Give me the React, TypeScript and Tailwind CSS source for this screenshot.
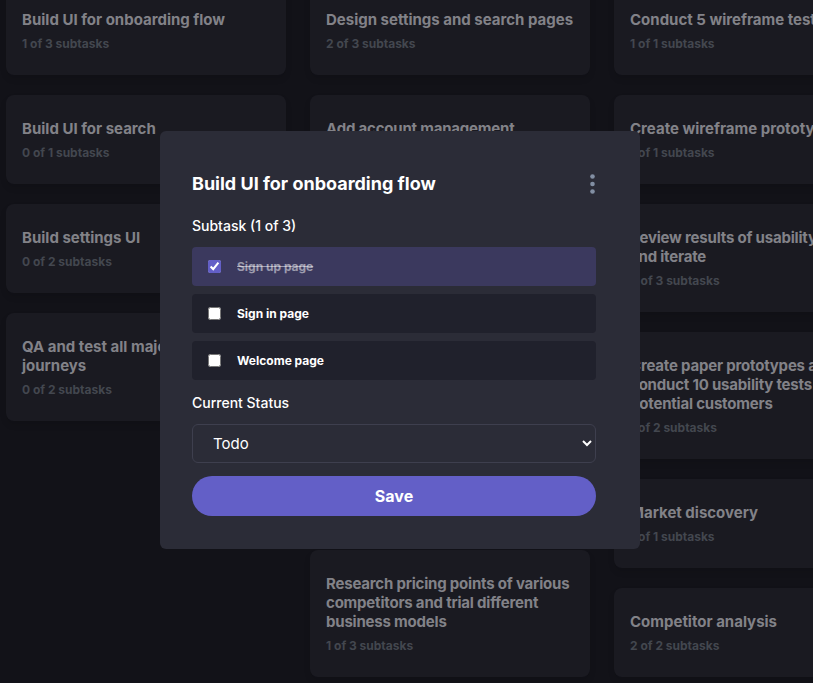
import React from "react";

type Card = { title: string; sub: string; wide?: boolean };

const col1: Card[] = [
  { title: "Build UI for onboarding flow", sub: "1 of 3 subtasks", wide: true },
  { title: "Build UI for search", sub: "0 of 1 subtasks", wide: true },
  { title: "Build settings UI", sub: "0 of 2 subtasks", wide: true },
  { title: "QA and test all major user journeys", sub: "0 of 2 subtasks", wide: true },
];
const col2: Card[] = [
  { title: "Design settings and search pages", sub: "2 of 3 subtasks", wide: true },
  { title: "Add account management endpoints", sub: "2 of 3 subtasks" },
  { title: "Design onboarding flow", sub: "1 of 3 subtasks" },
  { title: "Add search endpoints", sub: "1 of 2 subtasks" },
  { title: "Add authentication endpoints", sub: "1 of 2 subtasks" },
  { title: "Research pricing points of various competitors and trial different business models", sub: "1 of 3 subtasks" },
];
const col3: Card[] = [
  { title: "Conduct 5 wireframe tests", sub: "1 of 1 subtasks", wide: true },
  { title: "Create wireframe prototype", sub: "1 of 1 subtasks", wide: true },
  { title: "Review results of usability tests and iterate", sub: "3 of 3 subtasks" },
  { title: "Create paper prototypes and conduct 10 usability tests with potential customers", sub: "1 of 2 subtasks" },
  { title: "Market discovery", sub: "1 of 1 subtasks", wide: true },
  { title: "Competitor analysis", sub: "2 of 2 subtasks", wide: true },
];

function TaskCard({ c }: { c: Card }) {
  return (
    <div className="rounded-lg bg-[#1a1a21] px-4 pt-[24px] pb-[23px] shadow-[0_4px_6px_rgba(0,0,0,0.1)]">
      <div
        className={
          "text-[15px] leading-[19px] font-bold text-[#828288] " +
          (c.wide ? "tracking-normal" : "tracking-[-0.2px]")
        }
      >
        {c.title}
      </div>
      <div className="mt-[7px] text-[12px] leading-[16px] font-bold text-[#43474f]">{c.sub}</div>
    </div>
  );
}

function Column({ cards }: { cards: Card[] }) {
  return (
    <div className="flex w-[280px] shrink-0 flex-col gap-5">
      {cards.map((c, i) => (
        <TaskCard key={i} c={c} />
      ))}
    </div>
  );
}

function Subtask({ label, done }: { label: string; done?: boolean }) {
  return (
    <label
      className={
        "flex h-[39px] items-center gap-4 rounded px-4 " +
        (done ? "bg-[#3b395e]" : "bg-[#20212c]")
      }
    >
      <input
        type="checkbox"
        defaultChecked={done}
        className="h-[13px] w-[13px] accent-[#635fc7]"
      />
      <span
        className={
          "text-[12px] font-bold " +
          (done ? "text-white/50 line-through" : "text-white")
        }
      >
        {label}
      </span>
    </label>
  );
}

export default function App() {
  return (
    <div
      className="relative h-[683px] w-[813px] overflow-hidden bg-[#121218]"
      style={{ fontFamily: "Inter, 'Noto Sans', sans-serif" }}
    >
      <div className="-mt-[14px] ml-[6px] flex gap-6">
        <Column cards={col1} />
        <Column cards={col2} />
        <Column cards={col3} />
      </div>

      <div className="absolute left-[160px] top-[131px] w-[480px] rounded-md bg-[#2b2c37] pt-[41px] pb-[33px] pl-8 pr-[44px]">
        <div className="flex items-center justify-between">
          <h2 className="text-[18px] leading-[24px] font-bold text-white">
            Build UI for onboarding flow
          </h2>
          <svg width="5" height="20" viewBox="0 0 5 20" className="mr-[1px]">
            <circle cx="2.5" cy="2.5" r="2.3" fill="#828fa3" />
            <circle cx="2.5" cy="10" r="2.3" fill="#828fa3" />
            <circle cx="2.5" cy="17.5" r="2.3" fill="#828fa3" />
          </svg>
        </div>
        <div className="mt-[21px] text-[14px] leading-[18px] font-medium text-white">
          Subtask (1 of 3)
        </div>
        <div className="mt-[12px] flex flex-col gap-2">
          <Subtask label="Sign up page" done />
          <Subtask label="Sign in page" />
          <Subtask label="Welcome page" />
        </div>
        <div className="mt-[14px] text-[14px] leading-[18px] font-medium text-white">
          Current Status
        </div>
        <select className="mt-[12px] h-[39px] w-full rounded-md border border-[#3e3f4e] bg-[#2b2c37] pl-[16px] pr-2 text-[15px] text-white outline-none">
          <option>Todo</option>
          <option>Doing</option>
          <option>Done</option>
        </select>
        <button className="mt-[13px] h-[40px] w-full rounded-full bg-[#635fc7] text-[16px] font-bold text-white">
          Save
        </button>
      </div>
    </div>
  );
}
